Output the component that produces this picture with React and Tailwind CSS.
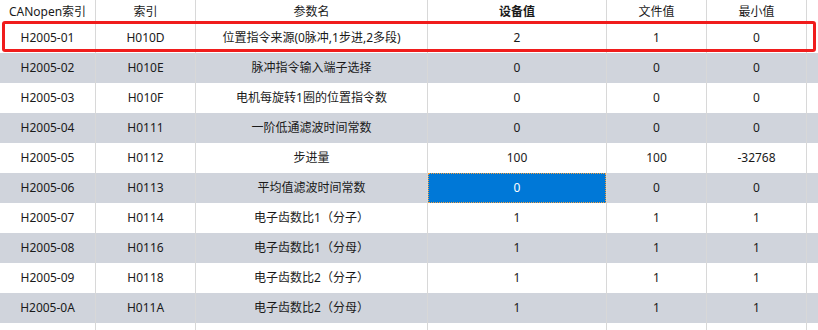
import React from "react";

const cols = ["CANopen索引", "索引", "参数名", "设备值", "文件值", "最小值"];

const rows = [
  ["H2005-01", "H010D", "位置指令来源(0脉冲,1步进,2多段)", "2", "1", "0"],
  ["H2005-02", "H010E", "脉冲指令输入端子选择", "0", "0", "0"],
  ["H2005-03", "H010F", "电机每旋转1圈的位置指令数", "0", "0", "0"],
  ["H2005-04", "H0111", "一阶低通滤波时间常数", "0", "0", "0"],
  ["H2005-05", "H0112", "步进量", "100", "100", "-32768"],
  ["H2005-06", "H0113", "平均值滤波时间常数", "0", "0", "0"],
  ["H2005-07", "H0114", "电子齿数比1（分子）", "1", "1", "1"],
  ["H2005-08", "H0116", "电子齿数比1（分母）", "1", "1", "1"],
  ["H2005-09", "H0118", "电子齿数比2（分子）", "1", "1", "1"],
  ["H2005-0A", "H011A", "电子齿数比2（分母）", "1", "1", "1"],
  ["", "", "", "", "", ""],
];

const gridCols = "grid grid-cols-[96px_100px_232px_179px_100px_100px_1fr]";

export default function App() {
  return (
    <div
      className="relative w-[818px] h-[330px] overflow-hidden bg-white text-[12px] text-[#1a1a1a]"
      style={{ fontFamily: '"Noto Sans", "Noto Sans CJK SC", sans-serif' }}
    >
      {/* header */}
      <div className={`${gridCols} h-[23px]`}>
        {cols.map((c, i) => (
          <div
            key={c}
            className={`flex items-center justify-center border-r border-[#d8d8d8] ${i === 3 ? "font-bold" : ""}`}
          >
            {c}
          </div>
        ))}
        <div />
      </div>

      {rows.map((r, ri) => (
        <div
          key={ri}
          className={`${gridCols} h-[30px] ${ri % 2 === 1 ? "bg-[#d0d4dc]" : "bg-white"}`}
        >
          {r.map((v, ci) => (
            <div key={ci} className="flex border-r border-[#d8d8d8]">
              {ri === 5 && ci === 3 ? (
                <div className="flex flex-1 items-center justify-center bg-[#0078d7] text-white border border-dotted border-[#f5a040]">
                  {v}
                </div>
              ) : (
                <div className="flex flex-1 items-center justify-center">{v}</div>
              )}
            </div>
          ))}
          <div />
        </div>
      ))}

      {/* red highlight box */}
      <div className="absolute left-[2px] top-[21px] w-[814px] h-[31px] border-[3px] border-[#f01c1c] rounded-[3px]" />
    </div>
  );
}
